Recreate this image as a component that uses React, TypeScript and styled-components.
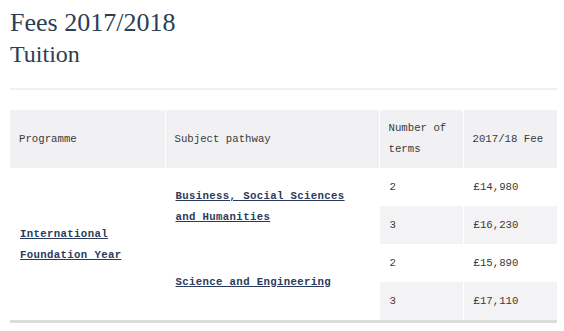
import React from 'react';
import styled, { createGlobalStyle } from 'styled-components';

const GlobalStyle = createGlobalStyle`
  body {
    margin: 0;
    background: #fff;
  }
`;

const Page = styled.div`
  padding: 8px 0 0 10px;
  width: 547px;
`;

const Title = styled.h1`
  margin: 0;
  font-family: 'Liberation Serif', 'Times New Roman', serif;
  font-weight: normal;
  font-size: 26px;
  line-height: 30px;
  color: #2c3e55;
`;

const SubTitle = styled.h2`
  margin: 0;
  font-family: 'Liberation Serif', 'Times New Roman', serif;
  font-weight: normal;
  font-size: 24px;
  line-height: 32px;
  color: #2c3e55;
`;

const Rule = styled.div`
  margin-top: 18px;
  height: 2px;
  background: #f0f0f0;
`;

const Table = styled.table`
  margin-top: 20px;
  width: 547px;
  table-layout: fixed;
  border-collapse: collapse;
  border-bottom: 3px solid #dcdcdc;
  font-family: 'Liberation Mono', 'Courier New', monospace;
  font-size: 10.7px;
  line-height: 21px;
  color: #3a3a3a;
`;

const Head = styled.th`
  background: #f1f1f3;
  font-weight: normal;
  text-align: left;
  vertical-align: middle;
  padding: 8px 9px;
  border-right: 1px solid #fff;
  &:last-child {
    border-right: none;
  }
`;

const Cell = styled.td<{ shaded?: boolean }>`
  background: ${({ shaded }) => (shaded ? '#f3f3f5' : '#fff')};
  vertical-align: middle;
  padding: 9px 9px 8px 10px;
  border-right: 1px solid #fff;
  &:last-child {
    border-right: none;
  }
`;

const Link = styled.a`
  font-weight: bold;
  color: #2b3a5c;
  text-decoration: underline;
  letter-spacing: 0.35px;
`;

const rows = [
  { terms: 2, fee: '£14,980' },
  { terms: 3, fee: '£16,230' },
  { terms: 2, fee: '£15,890' },
  { terms: 3, fee: '£17,110' },
];

export default function App() {
  return (
    <>
      <GlobalStyle />
      <Page>
        <Title>Fees 2017/2018</Title>
        <SubTitle>Tuition</SubTitle>
        <Rule />
        <Table>
          <colgroup>
            <col style={{ width: 155 }} />
            <col style={{ width: 214 }} />
            <col style={{ width: 84 }} />
            <col style={{ width: 94 }} />
          </colgroup>
          <thead>
            <tr>
              <Head>Programme</Head>
              <Head>Subject pathway</Head>
              <Head>Number of terms</Head>
              <Head>2017/18 Fee</Head>
            </tr>
          </thead>
          <tbody>
            {rows.map((row, i) => (
              <tr key={i}>
                {i === 0 && (
                  <Cell rowSpan={4}>
                    <Link>International Foundation Year</Link>
                  </Cell>
                )}
                {i === 0 && (
                  <Cell rowSpan={2}>
                    <Link>Business, Social Sciences and Humanities</Link>
                  </Cell>
                )}
                {i === 2 && (
                  <Cell rowSpan={2}>
                    <Link>Science and Engineering</Link>
                  </Cell>
                )}
                <Cell shaded={i % 2 === 1}>{row.terms}</Cell>
                <Cell shaded={i % 2 === 1}>{row.fee}</Cell>
              </tr>
            ))}
          </tbody>
        </Table>
      </Page>
    </>
  );
}
